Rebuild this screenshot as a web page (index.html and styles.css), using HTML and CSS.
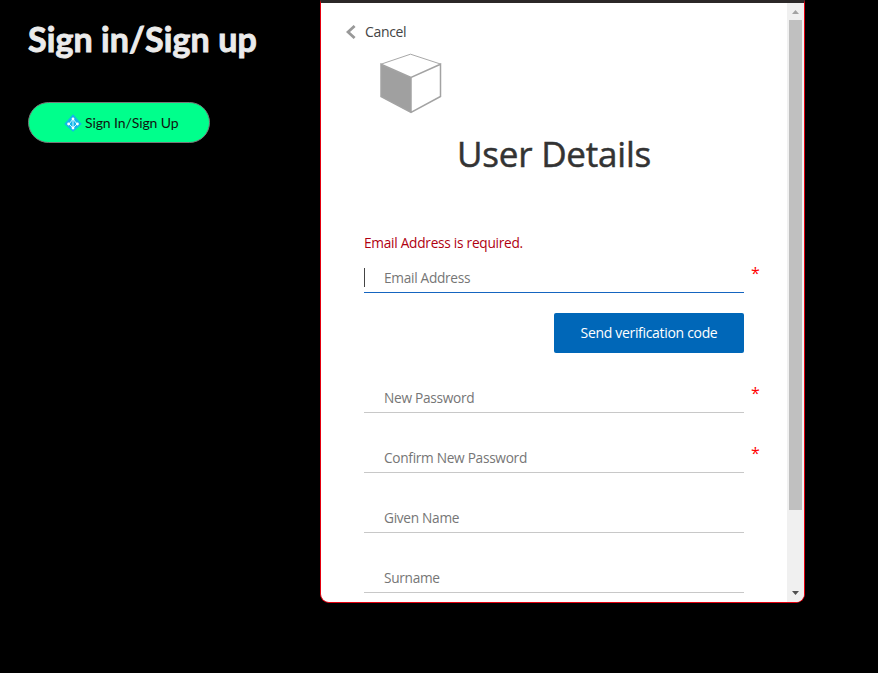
FILE: index.html
```html
<!DOCTYPE html>
<html lang="en">
<head>
<meta charset="utf-8">
<title>Sign in/Sign up</title>
<link rel="stylesheet" href="styles.css">
</head>
<body>
<main class="page">
  <section class="intro">
    <h1 class="intro-title">Sign in/Sign up</h1>
    <button class="signin">
      <svg class="signin-icon" width="18" height="18" viewBox="0 0 18 18"><path d="M9 .3 17.7 10 9 17.7.3 10Z" fill="#13b5ea"/><path d="M9 5v9M9 5 5 10l4 4 4-4Z" fill="none" stroke="#c9f4ff" stroke-width="1"/><g fill="#fff"><circle cx="9" cy="4.900" r="1.400"/><circle cx="4.600" cy="10" r="1.400"/><circle cx="13.400" cy="10" r="1.400"/><circle cx="9" cy="14" r="1.400"/></g></svg>
      <span>Sign In/Sign Up</span>
    </button>
  </section>
  <section class="panel">
    <div class="content">
      <a class="cancel"><svg width="10" height="14" viewBox="0 0 10 14"><path d="M8.600 1 2 7l6.600 6" fill="none" stroke="#999" stroke-width="2.800"/></svg><span>Cancel</span></a>
      <svg class="cube" width="62" height="61" viewBox="0 0 62 61"><path d="M1 11.500 31 24.500V59.500L1 43.500Z" fill="#a0a0a0"/><path d="M1 11.200 30.500 1.200 61 11.200" fill="none" stroke="#a8a8a8" stroke-width="1"/><path d="M1 11.200 31 24.500 60.500 11.200V43.500L31 59.500 1 43.500ZM31 24.500V59.500" fill="none" stroke="#a3a3a3" stroke-width="1.500"/></svg>
      <h2 class="title">User Details</h2>
      <p class="error">Email Address is required.</p>
      <div class="field field-active"><i class="caret"></i><span>Email Address</span><b>*</b></div>
      <button class="send">Send verification code</button>
      <div class="field"><span>New Password</span><b>*</b></div>
      <div class="field"><span>Confirm New Password</span><b>*</b></div>
      <div class="field"><span>Given Name</span></div>
      <div class="field"><span>Surname</span></div>
    </div>
    <div class="scrollbar">
      <svg width="7" height="4" viewBox="0 0 7 4"><path d="M0 4 3.500 0 7 4Z" fill="#a3a3a3"/></svg>
      <div class="thumb"></div>
      <svg class="down" width="7" height="4" viewBox="0 0 7 4"><path d="M0 0h7L3.500 4Z" fill="#505050"/></svg>
    </div>
  </section>
</main>
</body>
</html>
```
FILE: styles.css
```css
* { box-sizing: border-box; }
body { margin: 0; background: #000; overflow: hidden; font-family: "Open Sans", "Noto Sans", sans-serif; }
.page { display: flex; width: 878px; height: 673px; }
.intro { width: 320px; padding: 17px 0 0 28px; }
.intro-title { margin: 0 0 41px; height: 44px; font: 700 34px/44px Lato, sans-serif; letter-spacing: .1px; color: #ebebeb; white-space: nowrap; -webkit-text-stroke: .9px #ebebeb; }
.signin { display: flex; align-items: center; justify-content: flex-start; gap: 3px; width: 182px; height: 41px; padding: 0 0 0 35px; border: 1px solid #767676; border-radius: 21px; background: #00ff8c; color: #101510; font: 14px/20px Lato, sans-serif; letter-spacing: -.1px; white-space: nowrap; }
.panel { display: flex; width: 485px; height: 603px; border: 1px solid #e3000f; border-top: 3px solid #2b2828; border-radius: 0 0 9px 9px; background: #fff; overflow: hidden; }
.content { width: 466px; padding: 19px 43px 0; }
.cancel { display: flex; align-items: center; gap: 9px; height: 20px; margin-left: -18px; font-size: 14px; line-height: 20px; letter-spacing: -.35px; color: #444; }
.cube { display: block; margin: 11px 0 0 16px; }
.title { margin: 15px 0 0; height: 50px; text-align: center; font-size: 35px; line-height: 50px; font-weight: 500; letter-spacing: -.2px; color: #333; white-space: nowrap; -webkit-text-stroke: .5px #333; }
.error { margin: 54px 0 0; height: 20px; font-size: 13.7px; line-height: 20px; letter-spacing: -.27px; color: #b00010; }
.field { position: relative; display: flex; width: 380px; height: 40px; margin-top: 20px; padding: 15px 0 0 20px; border-bottom: 1px solid #c8c8c8; font-size: 13.7px; line-height: 20px; letter-spacing: -.3px; color: #767676; white-space: nowrap; }
.field-active { margin-top: 0; border-color: #1565c0; }
.caret { position: absolute; left: 0; top: 15px; width: 1px; height: 19px; background: #444; }
.field b { position: absolute; left: 387px; top: 10px; font-size: 16px; font-weight: 400; color: #f00; }
.send { display: block; width: 190px; height: 40px; margin: 20px 0 0 190px; padding: 0; border: 0; border-radius: 2px; background: #0067b8; color: #fff; font: 14px/20px "Open Sans", sans-serif; letter-spacing: -.32px; }
.scrollbar { display: flex; flex-direction: column; align-items: center; width: 17px; padding-top: 7px; background: #f0f0f0; }
.thumb { width: 13px; height: 490px; margin-top: 6px; background: #c0c0c0; }
.down { margin-top: 81px; }
```
